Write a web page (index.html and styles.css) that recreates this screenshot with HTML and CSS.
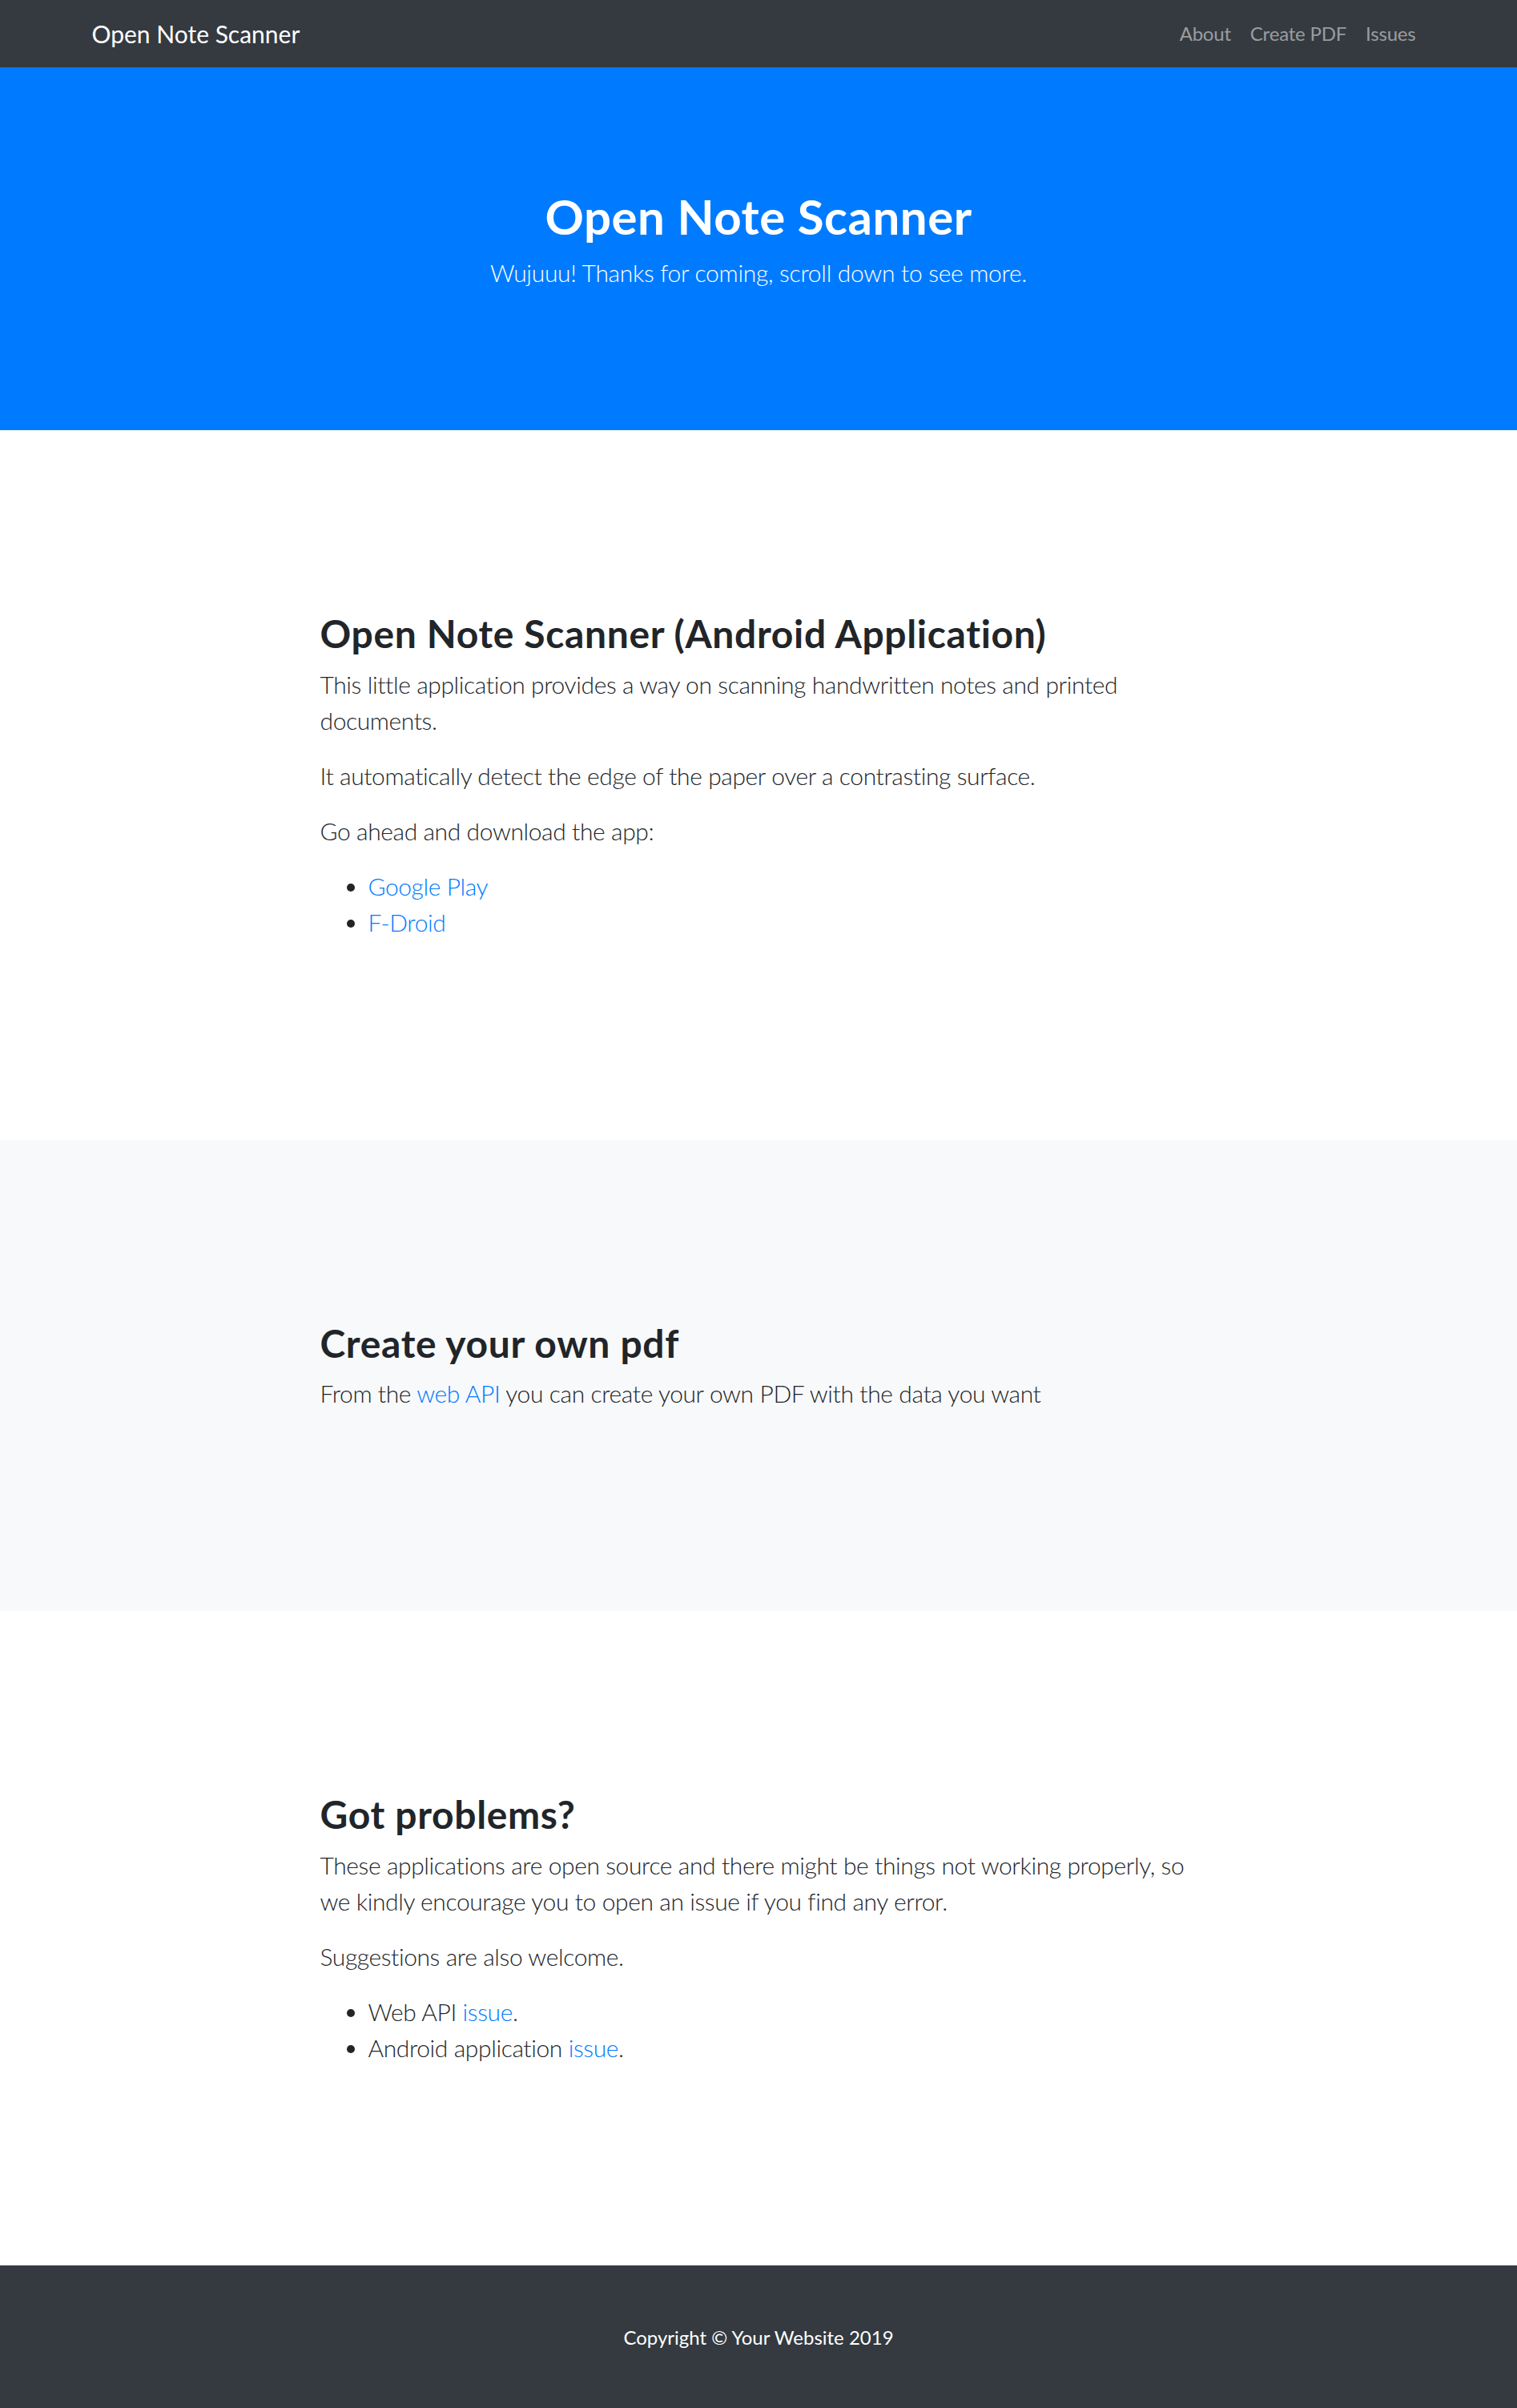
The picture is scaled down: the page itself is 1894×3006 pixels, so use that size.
FILE: index.html
```html
<!DOCTYPE html>
<html lang="en">
<head>
<meta charset="utf-8">
<title>Open Note Scanner</title>
<link rel="stylesheet" href="styles.css">
</head>
<body>
<nav class="navbar">
  <div class="container nav-inner">
    <a class="brand" href="#page-top">Open Note Scanner</a>
    <ul class="nav-links">
      <li><a href="#about">About</a></li>
      <li><a href="#services">Create PDF</a></li>
      <li><a href="#contact">Issues</a></li>
    </ul>
  </div>
</nav>

<header class="hero">
  <div class="container center">
    <h1 class="hero-title">Open Note Scanner</h1>
    <p class="lead hero-lead">Wujuuu! Thanks for coming, scroll down to see more.</p>
  </div>
</header>

<section class="section" id="about">
  <div class="container">
    <div class="col">
      <h2 class="title">Open Note Scanner (Android Application)</h2>
      <p class="lead">This little application provides a way on scanning handwritten notes and printed documents.</p>
      <p class="lead">It automatically detect the edge of the paper over a contrasting surface.</p>
      <p class="lead">Go ahead and download the app:</p>
      <ul class="lead list">
        <li><a href="#">Google Play</a></li>
        <li><a href="#">F-Droid</a></li>
      </ul>
    </div>
  </div>
</section>

<section class="section light" id="services">
  <div class="container">
    <div class="col">
      <h2 class="title">Create your own pdf</h2>
      <p class="lead">From the <a href="#">web API</a> you can create your own PDF with the data you want</p>
    </div>
  </div>
</section>

<section class="section" id="contact">
  <div class="container">
    <div class="col">
      <h2 class="title">Got problems?</h2>
      <p class="lead">These applications are open source and there might be things not working properly, so we kindly encourage you to open an issue if you find any error.</p>
      <p class="lead">Suggestions are also welcome.</p>
      <ul class="lead list">
        <li>Web API <a href="#">issue</a>.</li>
        <li>Android application <a href="#">issue</a>.</li>
      </ul>
    </div>
  </div>
</section>

<footer class="footer">
  <div class="container">
    <p class="copy">Copyright &copy; Your Website 2019</p>
  </div>
</footer>
</body>
</html>
```

FILE: styles.css
```css
* { box-sizing: border-box; }
html { font-size: 24px; }
body {
  margin: 0;
  font-family: "Lato", "Open Sans", sans-serif;
  font-size: 24px;
  line-height: 1.5;
  color: #212529;
  background: #fff;
}
a { color: #007bff; text-decoration: none; }
.container {
  width: 100%;
  max-width: 1710px;
  margin: 0 auto;
  padding: 0 22.5px;
}
.center { text-align: center; }

.navbar {
  background: #343a40;
  padding: 12px 24px;
  height: 84px;
}
.nav-inner {
  display: flex;
  align-items: center;
  justify-content: space-between;
}
.brand {
  color: #fff;
  font-size: 30px;
  line-height: 45px;
  padding: 7.5px 0;
}
.nav-links {
  display: flex;
  list-style: none;
  margin: 0;
  padding: 0;
}
.nav-links a {
  display: block;
  padding: 12px;
  color: rgba(255,255,255,.5);
  font-size: 24px;
  line-height: 36px;
  letter-spacing: -0.2px;
}

.hero {
  background: #007bff;
  color: #fff;
  padding: 150px 0 150px;
}
.hero-title {
  margin: 0 0 12px;
  font-size: 60px;
  font-weight: 700;
  line-height: 1.2;
  letter-spacing: 0.5px;
}

.lead {
  font-size: 30px;
  font-weight: 300;
  line-height: 45px;
  margin: 0 0 24px;
  letter-spacing: -0.4px;
}
.hero-lead { letter-spacing: -0.3px; }

.section { padding: 225px 0; }
.section.light { background: #f8f9fa; }
.col {
  width: 1140px;
  margin: 0 auto;
  padding: 0 22.5px;
}
.title {
  margin: 0 0 12px;
  font-size: 48px;
  font-weight: 700;
  line-height: 1.2;
  letter-spacing: 0.65px;
}
.list { padding-left: 60px; }

.footer {
  background: #343a40;
  padding: 72px 0;
}
.copy {
  margin: 0;
  color: #fff;
  text-align: center;
  font-size: 24px;
  line-height: 36px;
}
```
